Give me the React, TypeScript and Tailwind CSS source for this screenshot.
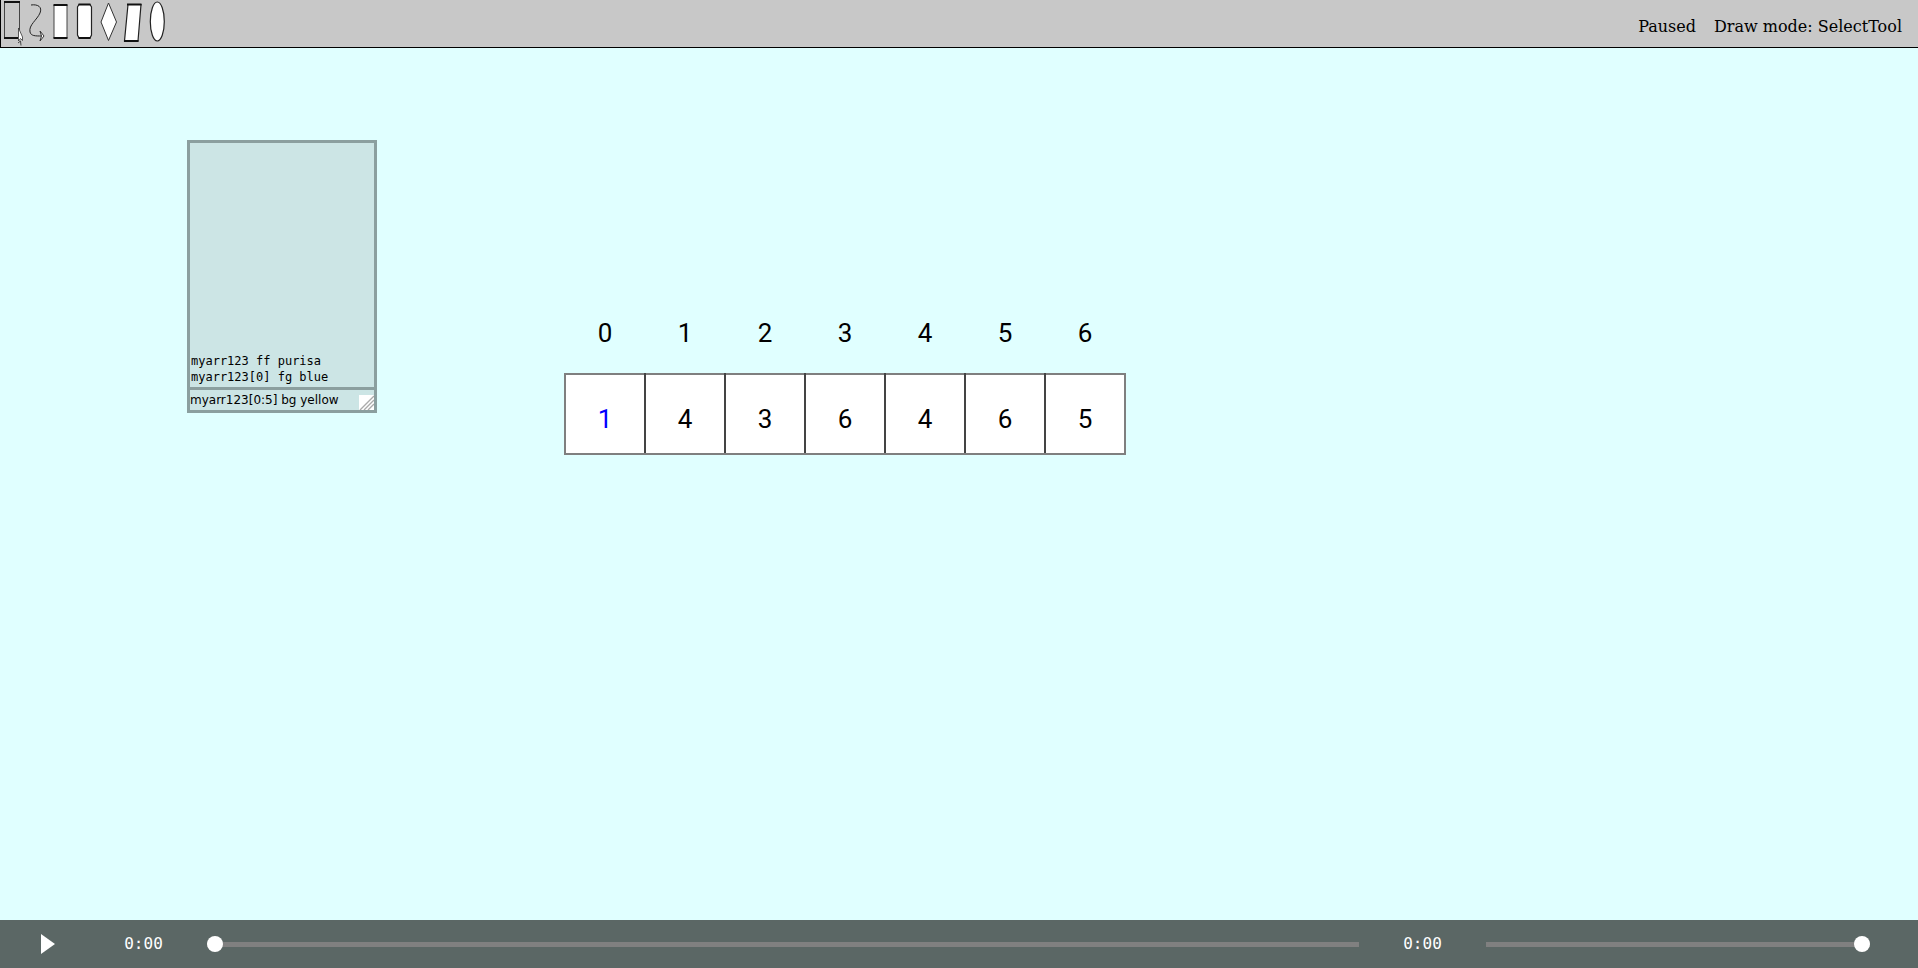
import { useState } from "react";
import type { ReactNode } from "react";

const values = [1, 4, 3, 6, 4, 6, 5];

const tools: { name: string; icon: ReactNode }[] = [
  {
    name: "SelectTool",
    icon: (
      <>
        <path d="M4.500 2V38M19.500 2V30" stroke="#444" fill="none" />
        <path d="M4 2H20M4 38H18" stroke="#111" strokeWidth="2" fill="none" />
        <path d="M18.500 28V41L20.500 38.500L22.500 40.500V37Z" fill="#fff" stroke="#333" strokeWidth="0.800" />
        <path d="M18 43L20.500 41L21 45.500" fill="none" stroke="#444" />
      </>
    ),
  },
  {
    name: "ConnectorTool",
    icon: (
      <>
        <path d="M7 5C14 4 18.500 7 16 13C13 20 4.500 25 6 32C7 36 11 36 18 36" fill="none" stroke="#222" />
        <path d="M16 31L20 36L16 41L17.500 36Z" fill="#fff" stroke="#333" />
      </>
    ),
  },
  {
    name: "RectTool",
    icon: (
      <>
        <path d="M6 5H19V38H6Z" fill="#fff" stroke="#444" />
        <path d="M5.500 5H19.500M5.500 38H19.500" stroke="#111" strokeWidth="2" />
      </>
    ),
  },
  {
    name: "RoundedRectTool",
    icon: (
      <>
        <path d="M7 4.500H18L19.500 7V35L18 38H7L5.500 35V7Z" fill="#fff" stroke="#222" strokeWidth="1.200" />
        <path d="M6.500 4.500H18.500M6.500 38H18.500" stroke="#111" strokeWidth="2" />
      </>
    ),
  },
  {
    name: "DiamondTool",
    icon: <path d="M12.500 3L20.500 22L12.500 40.500L5 22Z" fill="#fff" stroke="#333" />,
  },
  {
    name: "ParallelogramTool",
    icon: (
      <>
        <path d="M8 4.500H21L18 41H4.500Z" fill="#fff" stroke="#222" strokeWidth="1.200" />
        <path d="M7 4.500H21.500M4 41H18.500" stroke="#111" strokeWidth="2" />
      </>
    ),
  },
  {
    name: "EllipseTool",
    icon: <ellipse cx="13.300" cy="21.500" rx="7" ry="19.500" fill="#fff" stroke="#222" strokeWidth="1.200" />,
  },
];

function Toolbar({ mode, onPick }: { mode: string; onPick: (name: string) => void }) {
  return (
    <header className="flex h-12 shrink-0 justify-between border-b border-l border-black bg-[#c8c8c8]">
      <div className="flex">
        {tools.map((tool) => (
          <button key={tool.name} type="button" aria-label={tool.name} onClick={() => onPick(tool.name)} className="h-12 w-6">
            <svg viewBox="1 0 24 48" className="block h-12 w-6" aria-hidden="true">
              {tool.icon}
            </svg>
          </button>
        ))}
      </div>
      <div className="flex items-center gap-[18px] pt-[6px] pr-4 font-['DejaVu_Serif',serif] text-base text-black">
        <span>Paused</span>
        <span>Draw mode: {mode}</span>
      </div>
    </header>
  );
}

function CommandPanel() {
  const [command, setCommand] = useState("myarr123[0:5] bg yellow");
  return (
    <section className="absolute top-[92px] left-[187px] w-[190px] border-[3px] border-[#8b9f9f] bg-[#cce5e5] text-black">
      <div className="flex h-[244px] flex-col justify-end px-px pb-[2px] font-['DejaVu_Sans_Mono',monospace] text-xs leading-4">
        <p>myarr123 ff purisa</p>
        <p>myarr123[0] fg blue</p>
      </div>
      <div className="flex h-[23px] items-end border-t-[3px] border-[#8b9f9f]">
        <input
          aria-label="Command"
          value={command}
          onChange={(e) => setCommand(e.target.value)}
          className="h-5 min-w-0 flex-1 bg-transparent font-['DejaVu_Sans',sans-serif] text-xs outline-none"
        />
        <svg viewBox="0 0 15 15" className="size-[15px] shrink-0" aria-hidden="true">
          <path d="M0 0H15V15H0Z" fill="#fff" />
          <path d="M1 15L15 1M5 15L15 5M9 15L15 9" stroke="#aaa" strokeWidth="1.400" />
        </svg>
      </div>
    </section>
  );
}

function ArrayView() {
  return (
    <table className="absolute top-[246px] left-[564px] table-fixed border-collapse text-center font-[Purisa,Roboto,sans-serif] text-[26px] leading-8 text-black">
      <thead>
        <tr>
          {values.map((_, i) => (
            <th key={i} scope="col" className="h-20 w-20 p-0 pb-px font-normal">
              {i}
            </th>
          ))}
        </tr>
      </thead>
      <tbody>
        <tr>
          {values.map((value, i) => (
            <td
              key={i}
              className={`h-20 w-20 border-2 border-x-[#444] border-y-[#7f7f7f] bg-white p-0 pt-[10px] first:border-l-[#7f7f7f] last:border-r-[#7f7f7f] ${i === 0 ? "text-[#0000ff]" : ""}`}
            >
              {value}
            </td>
          ))}
        </tr>
      </tbody>
    </table>
  );
}

function Slider({ label, initial, className }: { label: string; initial: number; className: string }) {
  return (
    <input
      type="range"
      aria-label={label}
      defaultValue={initial}
      className={`h-4 min-w-0 cursor-pointer appearance-none bg-transparent [&::-webkit-slider-runnable-track]:h-[5px] [&::-webkit-slider-runnable-track]:bg-[#808080] [&::-webkit-slider-thumb]:-mt-[6px] [&::-webkit-slider-thumb]:size-4 [&::-webkit-slider-thumb]:appearance-none [&::-webkit-slider-thumb]:rounded-full [&::-webkit-slider-thumb]:bg-white ${className}`}
    />
  );
}

function Player() {
  return (
    <footer className="flex h-12 shrink-0 items-center bg-[#5b6765] pr-12 font-['DejaVu_Sans_Mono',monospace] text-base text-white">
      <button type="button" aria-label="Play" className="flex h-12 w-24 items-center justify-center">
        <svg viewBox="0 0 14 20" className="h-5 w-[14px]" aria-hidden="true">
          <path d="M0 0L14 10L0 20Z" fill="#fff" />
        </svg>
      </button>
      <span className="mr-4 w-[95px] text-center">0:00</span>
      <Slider label="Position" initial={0} className="flex-[3]" />
      <span className="w-[127px] text-center">0:00</span>
      <Slider label="Volume" initial={100} className="flex-1" />
    </footer>
  );
}

export default function App() {
  const [mode, setMode] = useState("SelectTool");
  return (
    <div className="flex h-screen flex-col overflow-hidden bg-[#e0ffff]">
      <Toolbar mode={mode} onPick={setMode} />
      <main className="relative flex-1">
        <CommandPanel />
        <ArrayView />
      </main>
      <Player />
    </div>
  );
}
